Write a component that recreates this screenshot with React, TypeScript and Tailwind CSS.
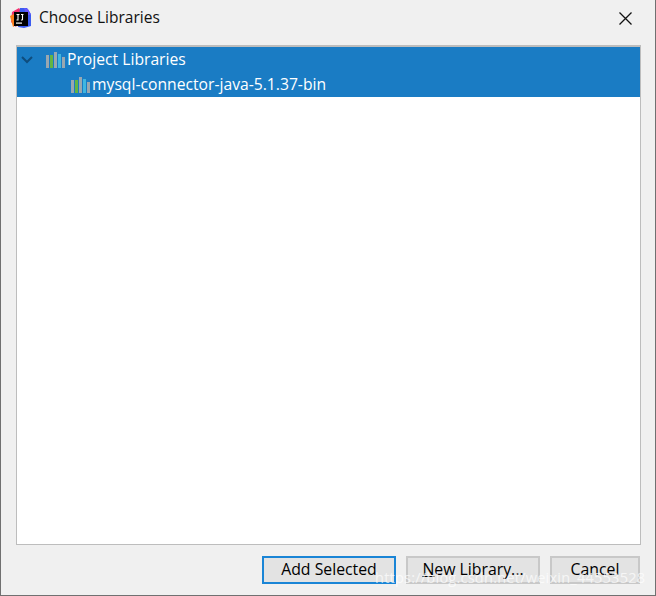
const Lib = () => (
  <svg width="20" height="16" viewBox="0 0 20 16" className="shrink-0">
    <rect x="0" y="3" width="3" height="13" fill="#9aa7b0" />
    <rect x="4" y="3" width="3" height="13" fill="#62b543" />
    <rect x="8" y="0" width="3" height="16" fill="#9aa7b0" />
    <rect x="12" y="2" width="3" height="14" fill="#40b6e0" />
    <rect x="16" y="5" width="3" height="11" fill="#9aa7b0" />
  </svg>
);

const Logo = () => (
  <svg width="21" height="21" viewBox="0 0 21 21" className="shrink-0">
    <path d="M2 4 L9 0 L12 4 L6 19 L1 14 Z" fill="#f5316f" />
    <path d="M0 8 L4 6 L6 17 L3 19 Z" fill="#fc801d" />
    <path d="M10 0 L17 0 L21 6 L21 18 L14 20 L8 19 Z" fill="#3b5cf0" />
    <path d="M14 0 L18 1 L21 7 L16 7 Z" fill="#6b57ff" />
    <rect x="4" y="4" width="14" height="14" fill="#000" />
    <rect x="6" y="14.5" width="6" height="1.2" fill="#fff" />
    <path d="M6.5 6.5H9.5M8 6.5V12H6.5M11 6.5H13.5M12.5 6.5V11.5Q12.5 12.2 11 12" stroke="#fff" strokeWidth="1.1" fill="none" />
  </svg>
);

const Btn = ({ label, w, focus, u }: { label: string; w: string; focus?: boolean; u?: string }) => (
  <button
    className={`${w} h-[28px] flex items-center justify-center text-[15.8px] text-black bg-[#e3e3e3] ${
      focus ? "border-2 border-[#1a85d6]" : "border-2 border-[#c8c8c8]"
    }`}
  >
    {u ? <span className="underline">{u}</span> : null}
    {label}
  </button>
);

export default function App() {
  return (
    <div
      className="relative w-[656px] h-[596px] overflow-hidden bg-[#f0f0f0] border-x border-b border-[#707070] flex flex-col"
      style={{ fontFamily: '"Open Sans", "Noto Sans", sans-serif' }}
    >
      <div className="h-[45px] shrink-0 flex items-center pl-[9px] pr-[23px] pb-[9px]">
        <Logo />
        <span className="ml-[8px] text-[15.5px] text-[#111]">Choose Libraries</span>
        <svg width="13" height="13" viewBox="0 0 13 13" className="ml-auto">
          <path d="M0.5 0.5L12.5 12.5M12.5 0.5L0.5 12.5" stroke="#111" strokeWidth="1.3" fill="none" />
        </svg>
      </div>
      <div className="mx-[15px] w-[625px] h-[500px] shrink-0 bg-white border-x border-b border-t-2 border-[#bdbdbd]">
        <div className="h-[25px] bg-[#1a7cc4] flex items-center text-white text-[15.7px] pl-[3px]">
          <svg width="14" height="10" viewBox="0 0 14 10" className="shrink-0">
            <path d="M2 2L7 7L12 2" stroke="#0f4d7d" strokeWidth="2" fill="none" />
          </svg>
          <span className="ml-[12px]"><Lib /></span>
          <span className="ml-[1px]">Project Libraries</span>
        </div>
        <div className="h-[25px] bg-[#1a7cc4] flex items-center text-white text-[15.7px] pl-[54px]">
          <Lib />
          <span className="ml-[1px]">mysql-connector-java-5.1.37-bin</span>
        </div>
      </div>
      <div className="flex justify-end gap-[10px] mt-[11px] pr-[15px]">
        <Btn label="Add Selected" w="w-[134px]" focus />
        <Btn label="ew Library..." u="N" w="w-[134px]" />
        <Btn label="Cancel" w="w-[90px]" />
      </div>
      <div className="absolute left-[374px] top-[567px] text-[14.6px] text-white/70 tracking-[0.2px] whitespace-nowrap">
        https://blog.csdn.net/weixin_44553528
      </div>
    </div>
  );
}
